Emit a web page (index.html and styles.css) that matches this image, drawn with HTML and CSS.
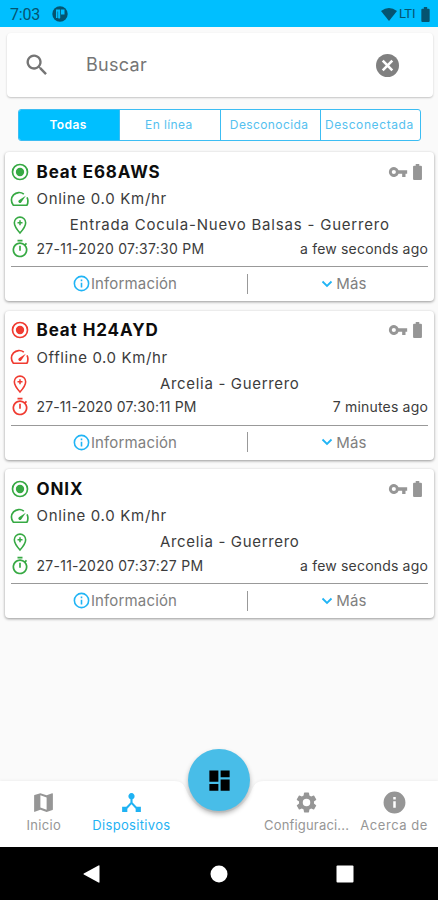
FILE: index.html
```html
<!DOCTYPE html>
<html lang="es">
<head>
<meta charset="utf-8">
<title>Dispositivos</title>
<link rel="stylesheet" href="styles.css">
</head>
<body>
<svg class="sprite" aria-hidden="true">
  <symbol id="radio" viewBox="0 0 24 24"><path d="M12 7a5 5 0 1 0 0 10 5 5 0 0 0 0-10zm0-5a10 10 0 1 0 0 20 10 10 0 0 0 0-20zm0 18a8 8 0 1 1 0-16 8 8 0 0 1 0 16z"/></symbol>
  <symbol id="speed" viewBox="0 0 24 24"><path fill="none" stroke="currentColor" stroke-width="2" stroke-linejoin="round" d="M16.600 6.200A9.200 9.200 0 0 0 4 19.500H20.300Q21.500 18 21.500 14.500 21.500 12 20.400 10"/><path d="M10.600 16.200a2 2 0 0 0 2.800 0L19 8l-8.400 5.400a2 2 0 0 0 0 2.800z"/></symbol>
  <symbol id="pin" viewBox="0 0 24 24"><path fill="none" stroke="currentColor" stroke-width="1.900" d="M12 2.500a6.800 6.800 0 0 0-6.800 6.800C5.200 14 12 21.700 12 21.700s6.800-7.700 6.800-12.400A6.800 6.800 0 0 0 12 2.500z"/><path d="M11.100 6.300h1.800v2.100H15v1.800h-2.100v2.100h-1.800v-2.100H9V8.400h2.100z"/></symbol>
  <symbol id="timer" viewBox="0 0 24 24"><path d="M9 1h6v2H9zM11 8h2v6h-2z"/><path d="M19.030 7.390l1.420-1.420a11 11 0 0 0-1.410-1.410l-1.420 1.420A9 9 0 1 0 19.030 7.390zM12 20a7 7 0 1 1 0-14 7 7 0 0 1 0 14z"/></symbol>
  <symbol id="key" viewBox="0 0 24 24"><path d="M12.650 10A6 6 0 1 0 12.650 14H17v4h4v-4h2v-4H12.650zM7 14.500a2.500 2.500 0 1 1 0-5 2.500 2.500 0 0 1 0 5z"/></symbol>
  <symbol id="battery" viewBox="0 0 10 18"><path d="M8.800 2H7V0H3v2H1.200Q0 2 0 3.200v13.600Q0 18 1.200 18h7.600q1.200 0 1.200-1.200V3.200Q10 2 8.800 2z"/></symbol>
  <symbol id="info" viewBox="0 0 24 24"><path d="M11 7h2v2h-2zm0 4h2v6h-2zm1-9a10 10 0 1 0 0 20 10 10 0 0 0 0-20zm0 18a8 8 0 1 1 0-16 8 8 0 0 1 0 16z"/></symbol>
  <symbol id="down" viewBox="0 0 12 8"><path fill="none" stroke="currentColor" stroke-width="1.800" d="M1.500 1.500 6 6l4.500-4.500"/></symbol>
</svg>

<div class="screen">
  <header class="status">
    <span class="clock">7:03</span>
    <svg class="app-mark" viewBox="0 0 16 16"><circle cx="8" cy="8" r="7.700" fill="#055470"/><path fill="#00bfff" d="M4 3.500h4.200V12q-1 1.200-2.100 0V5.500H5.500V12H4zM9 3.500h3.500v5H9z"/></svg>
    <svg class="wifi" viewBox="0 0 16 13"><path d="M0 3q8-6 16 0L8 13z"/></svg>
    <span class="lte">LTI</span>
    <svg class="status-battery"><use href="#battery"/></svg>
  </header>

  <main class="content">
    <div class="search">
      <svg class="search-icon" viewBox="0 0 24 24"><path d="M15.500 14h-.790l-.280-.270A6.500 6.500 0 1 0 13.730 14.430l.270.280v.790l5 4.990L20.490 19zM9.500 14a4.500 4.500 0 1 1 0-9 4.500 4.500 0 0 1 0 9z"/></svg>
      <span class="search-text">Buscar</span>
      <svg class="clear-icon" viewBox="0 0 24 24"><circle cx="12" cy="12" r="12"/><path fill="none" stroke="#fff" stroke-width="2.700" d="m7 7 10 10M17 7 7 17"/></svg>
    </div>

    <nav class="tabs">
      <span class="tab tab-active">Todas</span>
      <span class="tab tab-line">En línea</span>
      <span class="tab">Desconocida</span>
      <span class="tab tab-wide">Desconectada</span>
    </nav>

    <section class="cards">
      <article class="card online">
        <div class="row title-row"><svg class="icon"><use href="#radio"/></svg><h2 class="name">Beat E68AWS</h2><svg class="key"><use href="#key"/></svg><svg class="battery"><use href="#battery"/></svg></div>
        <div class="row speed-row"><svg class="icon"><use href="#speed"/></svg><span class="speed">Online 0.0 Km/hr</span></div>
        <div class="row address-row"><svg class="icon"><use href="#pin"/></svg><span class="address">Entrada Cocula-Nuevo Balsas - Guerrero</span></div>
        <div class="row time-row"><svg class="icon"><use href="#timer"/></svg><span class="time">27-11-2020 07:37:30 PM</span><span class="ago">a few seconds ago</span></div>
        <div class="actions"><span class="action details"><svg class="info"><use href="#info"/></svg>Información</span><span class="action more"><svg class="down"><use href="#down"/></svg>Más</span></div>
      </article>
      <article class="card offline">
        <div class="row title-row"><svg class="icon"><use href="#radio"/></svg><h2 class="name">Beat H24AYD</h2><svg class="key"><use href="#key"/></svg><svg class="battery"><use href="#battery"/></svg></div>
        <div class="row speed-row"><svg class="icon"><use href="#speed"/></svg><span class="speed speed-offline">Offline 0.0 Km/hr</span></div>
        <div class="row address-row"><svg class="icon"><use href="#pin"/></svg><span class="address address-short">Arcelia - Guerrero</span></div>
        <div class="row time-row"><svg class="icon"><use href="#timer"/></svg><span class="time time-narrow">27-11-2020 07:30:11 PM</span><span class="ago">7 minutes ago</span></div>
        <div class="actions"><span class="action details"><svg class="info"><use href="#info"/></svg>Información</span><span class="action more"><svg class="down"><use href="#down"/></svg>Más</span></div>
      </article>
      <article class="card online">
        <div class="row title-row"><svg class="icon"><use href="#radio"/></svg><h2 class="name">ONIX</h2><svg class="key"><use href="#key"/></svg><svg class="battery"><use href="#battery"/></svg></div>
        <div class="row speed-row"><svg class="icon"><use href="#speed"/></svg><span class="speed">Online 0.0 Km/hr</span></div>
        <div class="row address-row"><svg class="icon"><use href="#pin"/></svg><span class="address address-short">Arcelia - Guerrero</span></div>
        <div class="row time-row"><svg class="icon"><use href="#timer"/></svg><span class="time">27-11-2020 07:37:27 PM</span><span class="ago">a few seconds ago</span></div>
        <div class="actions"><span class="action details"><svg class="info"><use href="#info"/></svg>Información</span><span class="action more"><svg class="down"><use href="#down"/></svg>Más</span></div>
      </article>
    </section>
  </main>

  <footer class="bottom">
    <svg class="bar-shape" viewBox="0 0 438 70"><path d="M0 4H173C183 4 184 8 187 15A35 35 0 0 0 251 15C254 8 255 4 265 4H438V70H0z"/></svg>
    <div class="items">
      <span class="item"><svg viewBox="0 0 24 24"><path d="M20.500 3l-.160.030L15 5.100 9 3 3.360 4.900A.5.5 0 0 0 3 5.380V20.500a.5.5 0 0 0 .660.470L9 18.900l6 2.100 5.640-1.900a.5.5 0 0 0 .360-.480V3.500a.5.5 0 0 0-.5-.5zM15 19l-6-2.110V5l6 2.110z"/></svg><span class="label">Inicio</span></span>
      <span class="item item-active"><svg viewBox="0 0 24 24"><path d="M17 16l-4-4V8.820a3 3 0 1 0-2 0V12l-4 4H3v5h5v-3.050l4-4.200 4 4.200V21h5v-5z"/></svg><span class="label">Dispositivos</span></span>
      <span class="item"></span>
      <span class="item"><svg viewBox="0 0 24 24"><path d="M19.140 12.940a7 7 0 0 0 0-1.880l2.030-1.580a.5.5 0 0 0 .120-.610l-1.920-3.320a.5.5 0 0 0-.590-.220l-2.390.960a7 7 0 0 0-1.620-.940l-.360-2.540A.5.5 0 0 0 13.920 2.400h-3.840a.5.5 0 0 0-.490.410l-.360 2.540a7 7 0 0 0-1.620.940l-2.390-.960a.5.5 0 0 0-.590.220L2.710 8.870a.5.5 0 0 0 .120.610l2.030 1.580a7 7 0 0 0 0 1.880l-2.030 1.580a.5.5 0 0 0-.120.610l1.920 3.320a.5.5 0 0 0 .590.220l2.390-.960a7 7 0 0 0 1.620.940l.360 2.540a.5.5 0 0 0 .490.410h3.840a.5.5 0 0 0 .490-.410l.360-2.540a7 7 0 0 0 1.620-.940l2.390.960a.5.5 0 0 0 .590-.220l1.920-3.320a.5.5 0 0 0-.120-.610zM12 15.600a3.600 3.600 0 1 1 0-7.200 3.600 3.600 0 0 1 0 7.200z"/></svg><span class="label label-config">Configuraci...</span></span>
      <span class="item"><svg viewBox="0 0 24 24"><path d="M12 1.500a10.500 10.500 0 1 0 0 21 10.500 10.500 0 0 0 0-21zM13.200 17h-2.400v-6.200h2.400zm0-8h-2.400V6.700h2.400z"/></svg><span class="label label-about">Acerca de</span></span>
    </div>
    <div class="fab"><svg viewBox="0 0 24 24"><path d="M3 13h8V3H3zm0 8h8v-6H3zm10 0h8V11h-8zm0-18v6h8V3z"/></svg></div>
  </footer>

  <div class="system">
    <svg viewBox="0 0 18 18"><path d="M.800 8.400 15.500.500Q16.500 0 16.500 1v16q0 1-1 .5L.8 9.600Q0 9 .8 8.400z"/></svg>
    <svg viewBox="0 0 18 18"><circle cx="9" cy="9" r="8.500"/></svg>
    <svg viewBox="0 0 18 18"><rect x=".5" y=".5" width="17" height="17" rx="1"/></svg>
  </div>
</div>
</body>
</html>
```

FILE: styles.css
```css
* { box-sizing: border-box; }
body { margin: 0; background: #fafafa; font-family: Inter, "Open Sans", sans-serif; color: #3c3c3c; }
svg { display: block; fill: currentColor; flex: none; }
.sprite { position: absolute; width: 0; height: 0; }
.screen { width: 438px; height: 900px; display: flex; flex-direction: column; overflow: hidden; white-space: nowrap; }

.status { height: 27px; flex: none; background: #00bfff; color: #055470; display: flex; align-items: center; padding: 1px 8px 0 10px; }
.clock { font: 16px/20px Roboto, sans-serif; width: 42px; letter-spacing: -.2px; padding-top: 1px; }
.app-mark { width: 16px; height: 16px; margin-right: auto; }
.wifi { width: 16px; height: 13px; }
.lte { font: 13px/18px Roboto, sans-serif; margin-left: 2px; width: 22px; }
.status-battery { width: 9px; height: 15px; }

.content { flex: 1; padding: 6px 4px 0 5px; }
.search { height: 64px; margin: 0 1px 0 2px; background: #fff; border-radius: 4px; box-shadow: 0 1px 2px rgba(0,0,0,.22); display: flex; align-items: center; padding: 0 34px 0 16px; }
.search-icon { width: 28px; height: 28px; color: #757575; }
.search-text { margin-left: 35px; font-size: 18px; letter-spacing: .3px; color: #757575; padding-bottom: 2px; }
.clear-icon { width: 23px; height: 23px; color: #808080; margin-left: auto; }

.tabs { display: grid; grid-template-columns: repeat(4, 1fr); height: 32px; margin: 12px 13px 0 13px; border: 1px solid #3cbdf3; border-radius: 3px; background: #fff; overflow: hidden; }
.tab { display: flex; align-items: center; justify-content: center; font-size: 12px; letter-spacing: .4px; color: #55c1ef; padding: 0 2px 1px 0; min-width: 0; }
.tab + .tab { border-left: 1px solid #3cbdf3; }
.tab-wide { letter-spacing: .6px; }
.tab-active { background: #00bfff; color: #fff; font-weight: 600; }

.cards { display: flex; flex-direction: column; gap: 9.500px; margin-top: 11px; }
.card { height: 149px; background: #fff; border-radius: 4px; box-shadow: 0 1px 3px rgba(0,0,0,.4); padding: 7.500px 6px 0; }
.online { --state: #36a943; }
.offline { --state: #f03a30; }
.row { display: flex; align-items: center; }
.icon { width: 20px; height: 20px; color: var(--state); margin: 0 6.500px 0 -1px; }
.title-row { height: 24px; }
.name { margin: 0 auto 0 0; font-size: 17px; line-height: 24px; font-weight: 700; letter-spacing: .9px; color: #0d0d0d; }
.key { width: 20px; height: 20px; color: #969696; margin-right: 5px; }
.battery { width: 9px; height: 16px; color: #969696; margin-right: 6px; }
.speed-row { height: 30px; }
.speed { font-size: 15px; letter-spacing: .7px; }
.speed-offline { letter-spacing: .6px; }
.address-row { height: 23px; }
.address { flex: 1; text-align: center; font-size: 15px; letter-spacing: .8px; padding: 0 5px 1px 0; }
.address-short { letter-spacing: .68px; }
.time-row { height: 24px; }
.time, .ago { font-size: 14px; padding-bottom: 1px; }
.time { letter-spacing: .26px; }
.time-narrow { letter-spacing: .12px; }
.ago { margin-left: auto; letter-spacing: .18px; }
.actions { height: 34px; margin-top: 5.500px; border-top: 1px solid #999; display: flex; align-items: center; }
.action { display: flex; align-items: center; justify-content: center; font-size: 15px; letter-spacing: .15px; color: #808080; height: 20px; }
.details { width: 237px; border-right: 1px solid #999; padding-right: 9px; }
.more { flex: 1; padding-left: 12px; }
.info { width: 19px; height: 19px; color: #20b4f5; }
.down { width: 12px; height: 8px; margin-right: 3px; color: #20b4f5; }

.bottom { position: relative; flex: none; height: 70px; display: flex; border-bottom: 1px solid #aaa; }
.bar-shape { position: absolute; inset: 0; width: 438px; height: 70px; color: #fff; filter: drop-shadow(0 -1px 1px rgba(0,0,0,.04)); }
.items { position: relative; width: 438px; display: grid; grid-template-columns: repeat(5, 87.600px); padding-top: 13px; }
.item { display: flex; flex-direction: column; align-items: center; color: #969696; }
.item svg { width: 25px; height: 25px; }
.item-active { color: #1fb2f3; }
.label { font-size: 13px; line-height: 20px; letter-spacing: .33px; }
.label-config { letter-spacing: .17px; }
.label-about { letter-spacing: .55px; }
.fab { position: absolute; left: 188px; top: -28px; width: 62px; height: 62px; border-radius: 50%; background: #48bde8; box-shadow: 0 3px 5px rgba(0,0,0,.3); display: flex; align-items: center; justify-content: center; color: #000; }
.fab svg { width: 27px; height: 27px; }

.system { height: 53px; flex: none; background: #000; color: #fff; display: flex; justify-content: space-between; padding: 18px 84px 0 83px; }
.system svg { width: 18px; height: 18px; }
```
